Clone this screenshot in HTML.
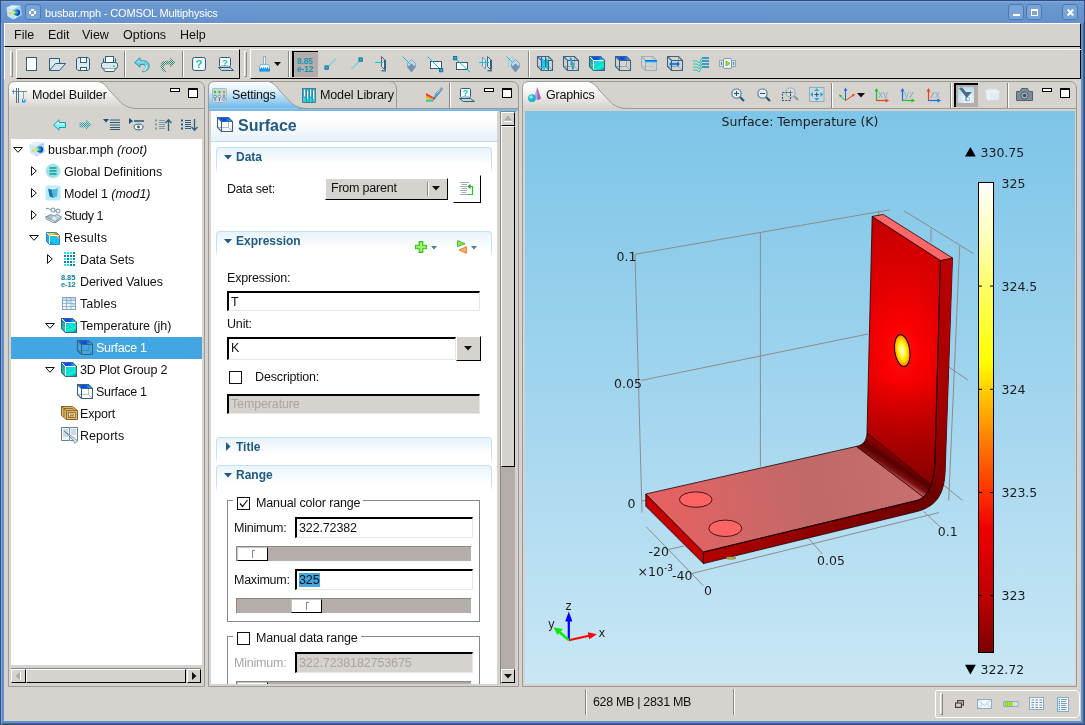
<!DOCTYPE html>
<html><head><meta charset="utf-8"><title>busbar.mph - COMSOL Multiphysics</title>
<style>
*{box-sizing:border-box;margin:0;padding:0}
html,body{width:1085px;height:725px;overflow:hidden;background:#d6d2ce}
body{font-family:"Liberation Sans",sans-serif;font-size:12px;color:#111;position:relative}
.abs,.t,svg.i{position:absolute}
svg.i{overflow:visible}
.t{white-space:nowrap;line-height:14px}
#frame{position:absolute;left:0;top:0;width:1085px;height:725px;will-change:transform}
#titlebar{position:absolute;left:1px;top:1px;width:1083px;height:22px;background:linear-gradient(#7ca6dc 0,#7ca6dc 1px,#6c99d2 2px,#6491cb 22px)}
#title{position:absolute;left:44px;top:6px;color:#fff;font-size:11px;letter-spacing:-0.15px;white-space:nowrap}
#client{position:absolute;left:4px;top:23px;width:1077px;height:698px;background:#d6d2ce}
#menubar{position:absolute;left:0;top:0;width:1077px;height:24px;border-top:1px solid #fff;border-left:1px solid #fff;border-bottom:1px solid #000;border-right:1px solid #000}
#menubar span{position:absolute;top:4px;font-size:12.5px}
.panel{position:absolute;border:1px solid #9d9995;border-radius:7px 7px 0 0;background:#d6d2ce;overflow:hidden}
.tabline{position:absolute;left:0;right:0;height:1px;background:#9d9995}
.sunk{position:absolute;border:1px solid;border-color:#000 #e8e6e4 #e8e6e4 #000;background:#fff}
.raised{position:absolute;border:1px solid;border-color:#fff #000 #000 #fff;background:#d6d2ce}
.sec{position:absolute;left:5px;width:276px;height:20px;border:1px solid #c2e1f4;border-bottom:none;border-radius:4px 4px 0 0;background:linear-gradient(#e8f3fb,#fff 90%)}
.sec b{position:absolute;left:19px;top:2px;color:#215a82;font-size:12px;white-space:nowrap;line-height:14px}
.vsep{position:absolute;width:2px;border-left:1px solid #8a8683;border-right:1px solid #fff}
.handle{position:absolute;width:3px;border-left:1px solid #fff;border-right:1px solid #8a8683;border-top:1px solid #fff;border-bottom:1px solid #8a8683}
.tbox{position:absolute;border-top:1px solid #fff;border-left:1px solid #fff;border-bottom:1px solid #000;border-right:1px solid #000}
.dv{font-family:"DejaVu Sans",sans-serif}
</style></head><body>
<div id="bg" style="position:absolute;left:0;top:0;width:1085px;height:725px;background:#6390ca;border:1px solid #34507e;box-shadow:inset 1px 1px 0 #7ca6dc,inset -1px -1px 0 #43639a"></div>
<div id="frame">
<div id="titlebar"><div id="title">busbar.mph - COMSOL Multiphysics</div></div>
<div id="client">
<div id="menubar"><span style="left:9px">File</span><span style="left:43px">Edit</span><span style="left:77px">View</span><span style="left:118px">Options</span><span style="left:175px">Help</span></div>
</div>
<svg width="0" height="0" style="position:absolute"><defs>
<linearGradient id="gsurf" x1="0" y1="0" x2="1" y2="0"><stop offset="0" stop-color="#18c0f0"/><stop offset="0.25" stop-color="#0a50f0"/><stop offset="0.55" stop-color="#0a48f0"/><stop offset="0.8" stop-color="#18b0f0"/><stop offset="1" stop-color="#20f0e8"/></linearGradient>
<linearGradient id="gvol" x1="0.2" y1="0" x2="0.8" y2="1"><stop offset="0" stop-color="#20b0f0"/><stop offset="0.25" stop-color="#10e0f0"/><stop offset="0.45" stop-color="#10e0a0"/><stop offset="0.6" stop-color="#08f0f0"/><stop offset="0.8" stop-color="#10d8c0"/><stop offset="1" stop-color="#1878f0"/></linearGradient>
<linearGradient id="gvolL" x1="0" y1="0" x2="0" y2="1"><stop offset="0" stop-color="#2a7fe8"/><stop offset="0.5" stop-color="#22b890"/><stop offset="1" stop-color="#30d8c8"/></linearGradient>
<linearGradient id="grain" x1="0" y1="1" x2="1" y2="0"><stop offset="0" stop-color="#1840d8"/><stop offset="0.3" stop-color="#20c8e8"/><stop offset="0.55" stop-color="#f0e040"/><stop offset="0.8" stop-color="#f07020"/><stop offset="1" stop-color="#d81818"/></linearGradient>
<linearGradient id="gcbar" x1="0" y1="0" x2="0" y2="1"><stop offset="0" stop-color="#ffffff"/><stop offset="0.12" stop-color="#ffffd0"/><stop offset="0.30" stop-color="#ffff60"/><stop offset="0.44" stop-color="#ffee00"/><stop offset="0.55" stop-color="#ffa000"/><stop offset="0.66" stop-color="#ff4000"/><stop offset="0.78" stop-color="#f00000"/><stop offset="0.90" stop-color="#b00000"/><stop offset="1" stop-color="#800000"/></linearGradient>
<pattern id="dith" width="2" height="2" patternUnits="userSpaceOnUse"><rect width="2" height="2" fill="#d6d2ce"/><rect width="1" height="1" fill="#2e8c78"/><rect x="1" y="1" width="1" height="1" fill="#2e8c78"/></pattern>
<pattern id="dithc" width="2" height="2" patternUnits="userSpaceOnUse"><rect width="2" height="2" fill="#d6d2ce"/><rect width="1" height="1" fill="#28a0a8"/><rect x="1" y="1" width="1" height="1" fill="#28a0a8"/></pattern>
</defs></svg>
<svg class="i" style="left:6px;top:5px" width="16" height="15" viewBox="0 0 16 15" ><path d="M0.5 2.8L5.5 0.3L14.5 0.8L15.8 10L7.5 14.5L1.5 11Z" fill="#a8d4f0" fill-opacity="0.85"/><path d="M0.5 2.8L7 4.5L7.5 14.5L1.5 11Z" fill="#d4ecfa" fill-opacity="0.75"/><path d="M0.5 2.8L5.5 0.3L14.5 0.8L7 4.5Z" fill="#e8f6fe" fill-opacity="0.8"/><path d="M7 4.5L14.5 0.8L15.8 10L7.5 14.5Z" fill="#9cccf0" fill-opacity="0.6"/>
<circle cx="11" cy="7.6" r="3.1" fill="#1038b8"/><circle cx="10" cy="7.3" r="2.4" fill="#1890e0"/><circle cx="8.6" cy="7.3" r="2" fill="#30d0a0"/><circle cx="7.6" cy="7.2" r="1.5" fill="#e8e830"/><circle cx="4.2" cy="8.6" r="1.3" fill="#e8d040"/><path d="M7.2 9.5L8 14L12 11.5Z" fill="#fff" fill-opacity="0.55"/></svg>
<div class="abs" style="left:25px;top:4px;width:16px;height:16px;border:1px solid #4d78b4;border-radius:3px;background:#7aa3d9"></div>
<svg class="i" style="left:29px;top:9px" width="8" height="8" viewBox="0 0 8 8" ><path d="M2 0H5V2H7V5H5V7H2V5H0V2H2Z" fill="#fff"/><rect x="2" y="2" width="3" height="3" fill="#7aa3d9"/></svg>
<div class="abs" style="left:1008px;top:4px;width:16px;height:16px;border:1px solid #4d78b4;border-radius:3px;background:#7aa3d9"></div>
<div class="abs" style="left:1026px;top:4px;width:16px;height:16px;border:1px solid #4d78b4;border-radius:3px;background:#7aa3d9"></div>
<div class="abs" style="left:1062px;top:4px;width:16px;height:16px;border:1px solid #4d78b4;border-radius:3px;background:#7aa3d9"></div>
<div class="abs" style="left:1013px;top:14px;width:7px;height:2px;background:#fff"></div>
<div class="abs" style="left:1031px;top:9px;width:7px;height:7px;border:1px solid #fff;border-top-width:2px"></div>
<svg class="i" style="left:1067px;top:9px" width="7" height="7" viewBox="0 0 7 7" ><path d="M0.7 0.5L6.3 6.5M6.3 0.5L0.7 6.5" stroke="#fff" stroke-width="2"/></svg>
<div class="abs" style="left:4px;top:47px;width:1077px;height:32px;border-left:1px solid #fff;border-right:1px solid #000"></div>
<div class="handle" style="left:10px;top:51px;height:26px"></div>
<div class="tbox" style="left:16px;top:49px;width:224px;height:30px"></div>
<div class="handle" style="left:244px;top:51px;height:26px"></div>
<div class="tbox" style="left:250px;top:49px;width:831px;height:30px;border-right:none"></div>
<div class="vsep" style="left:124px;top:51px;height:26px"></div>
<div class="vsep" style="left:182px;top:51px;height:26px"></div>
<div class="vsep" style="left:288px;top:51px;height:26px"></div>
<div class="vsep" style="left:528px;top:51px;height:26px"></div>
<svg class="i" style="left:26px;top:57px" width="11" height="14" viewBox="0 0 11 14" ><rect x="0.5" y="0.5" width="10" height="13" fill="#fff" stroke="#2c5f7a"/></svg>
<svg class="i" style="left:49px;top:58px" width="17" height="13" viewBox="0 0 17 13" ><path d="M0.5 12.5V0.5H10.5V5.5" fill="#dde8ee" stroke="#2c5f7a"/><path d="M0.5 12.5L6.5 5.5H16.5L10.5 12.5Z" fill="#d4e2ea" stroke="#2c5f7a"/></svg>
<svg class="i" style="left:76px;top:57px" width="14" height="14" viewBox="0 0 14 14" ><path d="M2 0.5H12L13.5 2V12L12 13.5H2L0.5 12V2Z" fill="#dde8ee" stroke="#2c5f7a"/><rect x="4.5" y="0.5" width="6" height="5" fill="#f4f8fa" stroke="#2c5f7a"/><rect x="4.5" y="10.5" width="6" height="3" fill="#fff" stroke="#2c5f7a"/></svg>
<svg class="i" style="left:101px;top:56px" width="17" height="16" viewBox="0 0 17 16" ><rect x="4.5" y="0.5" width="8" height="6" fill="#fff" stroke="#2c5f7a"/><path d="M2.5 6V2.5M14.5 6V2.5" stroke="#2c5f7a"/><rect x="0.5" y="6.5" width="16" height="6" rx="2" fill="#dce8f0" stroke="#2c5f7a"/><path d="M3 12.5V14Q3 15.5 5 15.5H12Q14 15.5 14 14V12.5" fill="#fff" stroke="#2c5f7a"/><rect x="12" y="9.5" width="1.5" height="1.5" fill="#20d020"/></svg>
<svg class="i" style="left:134px;top:57px" width="16" height="16" viewBox="0 0 16 16" ><path d="M0.5 5.5L6 0.8V3.8H10Q15.2 4.2 15.2 9.5Q15 13.5 9 15L8.5 14Q12 12.5 11.8 9.8Q11.5 7.5 9 7.5H6V10.2Z" fill="#6cd0dc" stroke="#2a90a8" stroke-width="0.9"/><path d="M12 8Q13.8 11 9.5 14.3" fill="none" stroke="#c8f0f4" stroke-width="1.3"/><path d="M3 5.5L5.5 3.4V5H10" fill="none" stroke="#a8e8f0" stroke-width="0.8"/></svg>
<svg class="i" style="left:159px;top:57px" width="17" height="16" viewBox="0 0 17 16" ><path d="M16.5 5.5L11 0.8V3.8H7Q1.5 4.2 1.5 9.5Q1.8 13.5 6.5 15.5L7 14.5Q4.8 12.5 5 9.8Q5.3 7.5 8 7.5H11V10.2Z" fill="url(#dith)"/></svg>
<svg class="i" style="left:192px;top:57px" width="14" height="14" viewBox="0 0 14 14" ><rect x="0.5" y="0.5" width="13" height="13" rx="2" fill="#e4eef4" stroke="#2c5f7a"/><rect x="2" y="2" width="10" height="10" fill="#f6fafc"/><text x="7" y="11.3" font-family="Liberation Sans,sans-serif" font-weight="bold" font-size="11.5" fill="#14c4b4" text-anchor="middle">?</text></svg>
<svg class="i" style="left:218px;top:57px" width="16" height="15" viewBox="0 0 16 15" ><rect x="1.5" y="0.5" width="11" height="9" rx="1" fill="#f6fafc" stroke="#2c5f7a"/><path d="M0.5 10.5H12.5L15.5 13.5H3.5Z" fill="#c8d4dc" stroke="#2c5f7a"/><rect x="3" y="8" width="8" height="2" fill="#b8c4cc"/><text x="7" y="8.6" font-family="Liberation Sans,sans-serif" font-weight="bold" font-size="9" fill="#14c4b4" text-anchor="middle">?</text></svg>
<svg class="i" style="left:259px;top:56px" width="12" height="16" viewBox="0 0 12 16" ><rect x="4.5" y="0.5" width="2" height="8" fill="#eef4f8" stroke="#8fb0c4"/><path d="M1.5 8.5H9.5L10.5 11V15H0.5V11Z" fill="#e8f2f8" stroke="#78a8c8" stroke-width="0.8"/><rect x="0.5" y="12.5" width="10.5" height="3" fill="#1898e8"/><path d="M2.5 11.5V13.5M4.5 11.5V13.5M6.5 11.5V13.5M8.5 11.5V13.5" stroke="#1898e8"/></svg>
<svg class="i" style="left:274px;top:62px" width="7" height="4" viewBox="0 0 7 4" ><path d="M0 0H7L3.5 4Z" fill="#111"/></svg>
<div class="abs" style="left:292px;top:51px;width:26px;height:26px;background:#b5adaa;border-top:1px solid #000;border-left:2px solid #000"></div>
<div class="t" style="left:297px;top:56.5px;font-size:8.5px;line-height:8px;font-weight:bold;color:#1c94b4;letter-spacing:-0.2px">8.85<br>e-12</div>
<svg class="i" style="left:324px;top:56px" width="14" height="16" viewBox="0 0 14 16" ><path d="M4.5 10.5L12 2.5" stroke="#58d0d8" stroke-width="1.6" stroke-dasharray="1 0.6"/><rect x="0.9" y="9.9" width="3.4" height="3.4" fill="#28a8d0" stroke="#106890" stroke-width="0.8"/></svg>
<svg class="i" style="left:350px;top:56px" width="14" height="16" viewBox="0 0 14 16" ><path d="M1.5 13L9.5 5" stroke="#58d0d8" stroke-width="1.6" stroke-dasharray="1 0.6"/><rect x="8.9" y="1.9" width="3.4" height="3.4" fill="#28a8d0" stroke="#106890" stroke-width="0.8"/></svg>
<svg class="i" style="left:375px;top:56px" width="12" height="16" viewBox="0 0 12 16" ><path d="M6.5 0.5L9.5 3.5V13.5L6.5 10.5Z" fill="#dce8f0" stroke="#2c5f7a" stroke-width="0.9"/><path d="M9.5 3.5L11 4V13.8L9.5 13.5" fill="#2c5f7a"/><path d="M6.5 14.8H11" stroke="#2c5f7a" stroke-width="1.2"/><path d="M0 6.5H8" stroke="#00c8d8" stroke-width="1"/><path d="M8 3V6" stroke="#f08080" stroke-width="0.8"/></svg>
<svg class="i" style="left:402px;top:56px" width="15" height="17" viewBox="0 0 15 17" ><path d="M9.5 3.5L13.5 7.5V11L9.5 16L5.5 11V7.5Z" fill="#c4d8e4" stroke="#5c88a4" stroke-width="0.6"/><path d="M5.5 11L9.5 7.5L13.5 11L9.5 16Z" fill="#6c94b0"/><path d="M0.5 0.5L8 8" stroke="#00c8d8" stroke-width="1"/></svg>
<svg class="i" style="left:427px;top:56px" width="17" height="17" viewBox="0 0 17 17" ><rect x="3.5" y="5.5" width="11" height="7" fill="#fff" stroke="#2c5f7a"/><path d="M0.5 0.5L13 13" stroke="#00c8d8" stroke-width="1"/><rect x="12.4" y="12.4" width="3.4" height="3.4" fill="#28a8d0" stroke="#106890" stroke-width="0.8"/></svg>
<svg class="i" style="left:453px;top:56px" width="18" height="17" viewBox="0 0 18 17" ><rect x="3.5" y="6.5" width="11" height="7" fill="#fff" stroke="#2c5f7a"/><path d="M4 4L17 16" stroke="#00c8d8" stroke-width="1"/><rect x="0.4" y="0.4" width="3.4" height="3.4" fill="#28a8d0" stroke="#106890" stroke-width="0.8"/></svg>
<svg class="i" style="left:479px;top:56px" width="14" height="16" viewBox="0 0 14 16" ><path d="M3.5 1L6.5 4V13L3.5 10Z" fill="#dce8f0" stroke="#5c88a4" stroke-width="0.8"/><path d="M8.5 0.5L11.5 3.5V13.5L8.5 10.5Z" fill="#dce8f0" stroke="#2c5f7a" stroke-width="0.9"/><path d="M11.5 3.5L13 4V13.8L11.5 13.5" fill="#2c5f7a"/><path d="M8.5 14.8H13" stroke="#2c5f7a" stroke-width="1.2"/><path d="M0 6.5H10" stroke="#00c8d8" stroke-width="1"/></svg>
<svg class="i" style="left:506px;top:56px" width="15" height="17" viewBox="0 0 15 17" ><path d="M2.5 4L7 0.5V7.5L2.5 11Z" fill="#c8dce8" stroke="#8fb0c4" stroke-width="0.5"/><path d="M9.5 3.5L13.5 7.5V11L9.5 16L5.5 11V7.5Z" fill="#c4d8e4" stroke="#5c88a4" stroke-width="0.6"/><path d="M5.5 11L9.5 7.5L13.5 11L9.5 16Z" fill="#6c94b0"/><path d="M0.5 0.5L7 7" stroke="#00c8d8" stroke-width="1"/></svg>
<svg class="i" style="left:537px;top:56px" width="16" height="15" viewBox="0 0 16 15" opacity="1"><path d="M0.5 10.5H11.5V0.5M11.5 10.5L15.5 14.5" fill="none" stroke="#3c6480" stroke-opacity="0.4"/><path d="M0.5 0.5H11.5L15.5 4.5V14.5H4.5L0.5 10.5ZM0.5 0.5L4.5 4.5H15.5M4.5 4.5V14.5" fill="none" stroke="#3c6480" stroke-width="1.1"/></svg>
<svg class="i" style="left:537px;top:56px" width="16" height="16" viewBox="0 0 16 16" ><path d="M4 1L8 5V15L4 11Z" fill="#20c8e8"/><path d="M8 1L12 5V15L8 11Z" fill="#20c090"/><path d="M4.5 1V11M8.5 1V11M11.5 4V15" stroke="#1060e8" stroke-width="1"/></svg>
<svg class="i" style="left:563px;top:56px" width="16" height="15" viewBox="0 0 16 15" opacity="1"><path d="M0.5 10.5H11.5V0.5M11.5 10.5L15.5 14.5" fill="none" stroke="#3c6480" stroke-opacity="0.4"/><path d="M0.5 0.5H11.5L15.5 4.5V14.5H4.5L0.5 10.5ZM0.5 0.5L4.5 4.5H15.5M4.5 4.5V14.5" fill="none" stroke="#3c6480" stroke-width="1.1"/></svg>
<svg class="i" style="left:563px;top:56px" width="16" height="16" viewBox="0 0 16 16" ><path d="M7 1Q10 3 8.5 5Q12 7 10.5 9.5Q12 12 9.5 14.5Q8 12 9 10Q6 8.5 8 6Q6 4 7 1Z" fill="#20a0e8"/><path d="M9 7Q10.5 9 9.5 12" stroke="#20c070" stroke-width="1.2" fill="none"/></svg>
<svg class="i" style="left:589px;top:56px" width="16" height="15" viewBox="0 0 16 15" opacity="1"><path d="M0.5 0.5H11.5L15.5 4.5H4.5Z" fill="url(#gsurf)"/><path d="M0.5 0.5L4.5 4.5V14.5L0.5 10.5Z" fill="url(#gvolL)"/><rect x="4.5" y="4.5" width="11" height="10" fill="url(#gvol)"/><path d="M1 1L4.5 4.5M4.5 14V4.5H15" fill="none" stroke="#fff" stroke-width="1"/><path d="M0.5 0.5H11.5L15.5 4.5V14.5H4.5L0.5 10.5Z" fill="none" stroke="#3c6480" stroke-width="1.1"/></svg>
<svg class="i" style="left:615px;top:56px" width="16" height="15" viewBox="0 0 16 15" opacity="1"><path d="M0.5 0.5H11.5L15.5 4.5H4.5Z" fill="url(#gsurf)"/><path d="M0.5 10.5H11.5V0.5M11.5 10.5L15.5 14.5" fill="none" stroke="#3c6480" stroke-opacity="0.4"/><path d="M0.5 0.5H11.5L15.5 4.5V14.5H4.5L0.5 10.5ZM0.5 0.5L4.5 4.5H15.5M4.5 4.5V14.5" fill="none" stroke="#3c6480" stroke-width="1.1"/></svg>
<svg class="i" style="left:641px;top:56px" width="16" height="15" viewBox="0 0 16 15" opacity="0.8"><path d="M0.5 10.5H11.5V0.5M11.5 10.5L15.5 14.5" fill="none" stroke="#8ea8b8" stroke-opacity="0.4"/><path d="M0.5 0.5H11.5L15.5 4.5V14.5H4.5L0.5 10.5ZM0.5 0.5L4.5 4.5H15.5M4.5 4.5V14.5" fill="none" stroke="#8ea8b8" stroke-width="1.1"/></svg>
<svg class="i" style="left:641px;top:56px" width="16" height="16" viewBox="0 0 16 16" ><rect x="4" y="4" width="12" height="2" fill="#1070f0"/><rect x="4" y="5.5" width="12" height="1" fill="#20d8f0"/></svg>
<svg class="i" style="left:667px;top:56px" width="16" height="15" viewBox="0 0 16 15" opacity="1"><path d="M0.5 10.5H11.5V0.5M11.5 10.5L15.5 14.5" fill="none" stroke="#3c6480" stroke-opacity="0.4"/><path d="M0.5 0.5H11.5L15.5 4.5V14.5H4.5L0.5 10.5ZM0.5 0.5L4.5 4.5H15.5M4.5 4.5V14.5" fill="none" stroke="#3c6480" stroke-width="1.1"/></svg>
<svg class="i" style="left:667px;top:56px" width="16" height="16" viewBox="0 0 16 16" ><path d="M3 8H12" stroke="#20c8f0" stroke-width="2.4"/><path d="M2 8L5 5.8V10.2ZM13 8L10 5.8V10.2Z" fill="#1060e0"/><path d="M4 8H11" stroke="#1060e0" stroke-width="1.2"/></svg>
<svg class="i" style="left:693px;top:56px" width="16" height="17" viewBox="0 0 16 17" ><path d="M0 5.0H4L6 7.0L9 2.0H16" fill="none" stroke="#28c8b8" stroke-width="1"/><path d="M9 2.0H16" stroke="#1880c0" stroke-width="1.3"/><path d="M0 8.0H4L6 10.0L9 5.0H16" fill="none" stroke="#28c8b8" stroke-width="1"/><path d="M9 5.0H16" stroke="#1880c0" stroke-width="1.3"/><path d="M0 11.0H4L6 13.0L9 8.0H16" fill="none" stroke="#28c8b8" stroke-width="1"/><path d="M9 8.0H16" stroke="#1880c0" stroke-width="1.3"/><path d="M0 14.0H4L6 16.0L9 11.0H16" fill="none" stroke="#28c8b8" stroke-width="1"/><path d="M9 11.0H16" stroke="#1880c0" stroke-width="1.3"/></svg>
<svg class="i" style="left:719px;top:58px" width="17" height="12" viewBox="0 0 17 12" ><rect x="0.5" y="2.5" width="16" height="6" fill="#d8e4ec" stroke="#7c9cb0" stroke-width="0.8"/><rect x="4.5" y="0.5" width="8" height="10" rx="1.5" fill="#eef4f8" stroke="#7c9cb0"/><path d="M7 3L11 5.5L7 8Z" fill="#a0e020" stroke="#60a010" stroke-width="0.6"/><path d="M2.5 4V7M14.5 4V7" stroke="#5c88a4" stroke-width="1.2"/></svg>
<svg width="0" height="0" style="position:absolute"><defs>
<linearGradient id="grain2" x1="0" y1="0" x2="1" y2="0"><stop offset="0" stop-color="#f0a020"/><stop offset="0.4" stop-color="#f8e020"/><stop offset="0.75" stop-color="#f08020"/><stop offset="1" stop-color="#e02010"/></linearGradient><linearGradient id="gres" x1="0" y1="1" x2="1" y2="0"><stop offset="0" stop-color="#1878f0"/><stop offset="0.35" stop-color="#10d0f0"/><stop offset="0.7" stop-color="#20b8f0"/><stop offset="0.85" stop-color="#f0c020"/><stop offset="1" stop-color="#f04010"/></linearGradient><linearGradient id="tabg" x1="0" y1="0" x2="0" y2="1"><stop offset="0" stop-color="#ffffff"/><stop offset="0.25" stop-color="#fbfbfa"/><stop offset="1" stop-color="#d6d2ce"/></linearGradient>
<linearGradient id="tabb" x1="0" y1="0" x2="0" y2="1"><stop offset="0" stop-color="#ffffff"/><stop offset="0.3" stop-color="#e4f2fb"/><stop offset="1" stop-color="#6cb9e8"/></linearGradient>
</defs></svg>
<div class="abs" id="mb" style="left:8px;top:81px;width:197px;height:606px">
<div class="abs" style="left:0;top:0;width:197px;height:606px;border:1px solid #9d9995;border-radius:7px 7px 0 0"></div>
<div class="abs" style="left:130px;top:27px;width:67px;height:1px;background:#9d9995"></div>
<svg class="i" style="left:0;top:0" width="197" height="30"><path d="M0.5 27.5V6.5Q0.5 0.5 6.5 0.5H89C95 0.5 98 5 102 10L111 19.5C115 24 120 27.5 130 27.5H0.5Z" fill="url(#tabg)"/><path d="M0.5 27.5V6.5Q0.5 0.5 6.5 0.5H89C95 0.5 98 5 102 10L111 19.5C115 24 120 27.5 130 27.5" fill="none" stroke="#9d9995"/></svg>
<svg class="i" style="left:4px;top:6px" width="16" height="17" viewBox="0 0 16 17" ><path d="M0 4.5H15" stroke="#6c8ca0"/><path d="M4.5 1V16M6.5 1V16" stroke="#4c748c"/><path d="M1.5 2.5V7" stroke="#6c8ca0"/><path d="M11.5 5V12" stroke="#8ca4b4"/><rect x="10" y="12" width="3.5" height="3.5" fill="#1890f0"/><rect x="11" y="12" width="1.5" height="2" fill="#d6e8f8"/></svg>
<div class="t" style="left:24px;top:7px;font-size:12.5px;letter-spacing:-0.134px">Model Builder</div>
<div class="abs" style="left:162px;top:7px;width:10px;height:4px;border:1px solid #000;background:#fff"></div><div class="abs" style="left:180px;top:7px;width:10px;height:10px;border:1px solid #000;border-top-width:2px;background:#fff"></div>
<svg class="i" style="left:45px;top:38px" width="13" height="12" viewBox="0 0 13 12" ><path d="M0.6 6L6 0.8V3.5H12.5V8.5H6V11.2Z" fill="#7ff0f4" stroke="#18a0b0" stroke-width="1"/><path d="M2.5 6L5.5 3.2V5H11V6" fill="none" stroke="#e0ffff" stroke-width="1"/></svg>
<svg class="i" style="left:71px;top:38px" width="13" height="12" viewBox="0 0 13 12" ><path d="M12.4 6L7 0.8V3.5H0.5V8.5H7V11.2Z" fill="url(#dithc)"/></svg>
<svg class="i" style="left:95px;top:38px" width="17" height="11" viewBox="0 0 17 11" ><path d="M0 0H6L3 3.5Z" fill="#1c4c80"/><path d="M7 1H17M7 3.5H17M7 6H17M7 8.5H17M7 10.5H17" stroke="#2c5f7a" stroke-width="1.2"/></svg>
<svg class="i" style="left:121px;top:37px" width="16" height="13" viewBox="0 0 16 13" ><path d="M0 0L4 3L0 6Z" fill="#1c4c80"/><path d="M5 3H15" stroke="#2c5f7a" stroke-width="1.6"/><ellipse cx="9.5" cy="9" rx="4.5" ry="2.8" fill="#fff" stroke="#2c5f7a" stroke-width="1"/><circle cx="9.5" cy="9" r="1.4" fill="#2c5f7a"/></svg>
<svg class="i" style="left:147px;top:38px" width="17" height="12" viewBox="0 0 17 12" ><path d="M0 0.5H2V2.5H0ZM0 4.5H2V6.5H0ZM0 8.5H2V10.5H0Z" fill="#7f9cac"/><path d="M4 1.5H10M4 3.5H10M4 5.5H10M4 7.5H10M4 9.5H10" stroke="#7f9cac" stroke-width="1"/><path d="M13.5 12V1M10.5 4L13.5 0.8L16.5 4" fill="none" stroke="#2c5f7a" stroke-width="1.3"/></svg>
<svg class="i" style="left:173px;top:38px" width="17" height="12" viewBox="0 0 17 12" ><path d="M0 0.5H2V2.5H0ZM0 4.5H2V6.5H0ZM0 8.5H2V10.5H0Z" fill="#2c5f7a"/><path d="M4 1.5H10M4 3.5H10M4 5.5H10M4 7.5H10M4 9.5H10" stroke="#2c5f7a" stroke-width="1"/><path d="M13.5 0V11M10.5 8L13.5 11.2L16.5 8" fill="none" stroke="#2c5f7a" stroke-width="1.3"/></svg>
<div class="abs" style="left:3px;top:58px;width:191px;height:526px;background:#fff"></div>
<div class="abs" style="left:3px;top:587px;width:190px;height:1px;background:#8a8683"></div>
<div class="raised" style="left:3px;top:588px;width:15px;height:14px"></div>
<div class="raised" style="left:18px;top:588px;width:160px;height:14px"></div>
<div class="raised" style="left:179px;top:588px;width:14px;height:14px"></div>
<svg class="i" style="left:7px;top:591px" width="6" height="8" viewBox="0 0 6 8" ><path d="M5 0V8L0.5 4Z" fill="#b0aaa6"/><path d="M5.5 0V8" stroke="#fff"/></svg>
<svg class="i" style="left:184px;top:591px" width="5" height="8" viewBox="0 0 5 8" ><path d="M0 0V8L4.5 4Z" fill="#111"/></svg>
<svg class="i" style="left:5px;top:66px" width="10" height="6" viewBox="0 0 10 6" ><path d="M0.7 0.5H9.3L5 5.3Z" fill="#fff" stroke="#111" stroke-width="1"/></svg>
<svg class="i" style="left:21px;top:61px" width="16" height="15" viewBox="0 0 16 15" ><path d="M0.5 2.8L5.5 0.3L14.5 0.8L15.8 10L7.5 14.5L1.5 11Z" fill="#a8d4f0" fill-opacity="0.85"/><path d="M0.5 2.8L7 4.5L7.5 14.5L1.5 11Z" fill="#d4ecfa" fill-opacity="0.75"/><path d="M0.5 2.8L5.5 0.3L14.5 0.8L7 4.5Z" fill="#e8f6fe" fill-opacity="0.8"/><path d="M7 4.5L14.5 0.8L15.8 10L7.5 14.5Z" fill="#9cccf0" fill-opacity="0.6"/>
<circle cx="11" cy="7.6" r="3.1" fill="#1038b8"/><circle cx="10" cy="7.3" r="2.4" fill="#1890e0"/><circle cx="8.6" cy="7.3" r="2" fill="#30d0a0"/><circle cx="7.6" cy="7.2" r="1.5" fill="#e8e830"/><circle cx="4.2" cy="8.6" r="1.3" fill="#e8d040"/><path d="M7.2 9.5L8 14L12 11.5Z" fill="#fff" fill-opacity="0.55"/></svg>
<div class="t" style="left:40px;top:62px;font-size:12.5px;letter-spacing:0.027px;color:#111">busbar.mph <i>(root)</i></div>
<svg class="i" style="left:23px;top:85px" width="6" height="10" viewBox="0 0 6 10" ><path d="M0.5 0.7V9.3L5.3 5Z" fill="#fff" stroke="#111" stroke-width="1"/></svg>
<svg class="i" style="left:37px;top:82px" width="16" height="16" viewBox="0 0 16 16" ><circle cx="8" cy="8" r="7.3" fill="#a4e4e0" stroke="#c8f0ee" stroke-width="0.6"/><path d="M4.5 5H11.5M4.5 8H11.5M4.5 11H11.5" stroke="#108c94" stroke-width="1.7"/><path d="M4.5 5.8H11.5M4.5 8.8H11.5M4.5 11.8H11.5" stroke="#20d8d8" stroke-width="0.6"/></svg>
<div class="t" style="left:56px;top:84px;font-size:12.5px;letter-spacing:0.019px;color:#111">Global Definitions</div>
<svg class="i" style="left:23px;top:107px" width="6" height="10" viewBox="0 0 6 10" ><path d="M0.5 0.7V9.3L5.3 5Z" fill="#fff" stroke="#111" stroke-width="1"/></svg>
<svg class="i" style="left:37px;top:104px" width="16" height="16" viewBox="0 0 16 16" ><rect x="0.5" y="0.5" width="15" height="15" rx="2.5" fill="#b8ecf6"/><path d="M3 3.5L7 4.5L8.5 13L4.5 11.5Z" fill="#1878b8"/><path d="M7 4.5L13 3L12 11.5L8.5 13Z" fill="#58b8e0"/><path d="M3 3.5L9 2L13 3L7 4.5Z" fill="#e0f6fc"/></svg>
<div class="t" style="left:56px;top:106px;font-size:12.5px;letter-spacing:-0.081px;color:#111">Model 1 <i>(mod1)</i></div>
<svg class="i" style="left:23px;top:129px" width="6" height="10" viewBox="0 0 6 10" ><path d="M0.5 0.7V9.3L5.3 5Z" fill="#fff" stroke="#111" stroke-width="1"/></svg>
<svg class="i" style="left:37px;top:126px" width="17" height="16" viewBox="0 0 17 16" ><circle cx="8" cy="3" r="2" fill="#fff" stroke="#4c748c" stroke-width="0.8"/><circle cx="13" cy="4" r="2" fill="#fff" stroke="#4c748c" stroke-width="0.8"/><path d="M1 1.5Q3 0.5 6 3M10 3.3L11 3.6" fill="none" stroke="#4c748c" stroke-width="0.8"/><path d="M0.5 10L6 7.5L9 9L12 7.5L16.5 10L10 14.5L7 13Z" fill="#e4ecf0" stroke="#4c748c" stroke-width="0.8"/><path d="M2 10L6.5 8.5M3 11L7.5 9.5M4.5 12L8 10.5M10 10L12 9M11 11.5L14 10" stroke="#6c8ca0" stroke-width="0.6"/><path d="M0.5 11.5L7 15L10 15.8L16.5 11.5" fill="none" stroke="#4c748c" stroke-width="0.8"/></svg>
<div class="t" style="left:56px;top:128px;font-size:12.5px;letter-spacing:-0.484px;color:#111">Study 1</div>
<svg class="i" style="left:21px;top:154px" width="10" height="6" viewBox="0 0 10 6" ><path d="M0.7 0.5H9.3L5 5.3Z" fill="#fff" stroke="#111" stroke-width="1"/></svg>
<svg class="i" style="left:38px;top:151px" width="15" height="13" viewBox="0 0 15 13" ><path d="M0.5 0.5H10.5L13.5 3.5H3.5Z" fill="url(#grain2)"/><path d="M0.5 0.5L3.5 3.5V12.5L0.5 9.5Z" fill="#28a8f0"/><rect x="3.5" y="3.5" width="10" height="9" fill="url(#gres)"/><path d="M1 1L3.5 3.5M3.5 12V3.5H13" fill="none" stroke="#fff" stroke-width="1"/><path d="M0.5 0.5H10.5L13.5 3.5V12.5H3.5L0.5 9.5Z" fill="none" stroke="#2888d0" stroke-width="1"/></svg>
<div class="t" style="left:56px;top:150px;font-size:12.5px;letter-spacing:0.203px;color:#111">Results</div>
<svg class="i" style="left:39px;top:173px" width="6" height="10" viewBox="0 0 6 10" ><path d="M0.5 0.7V9.3L5.3 5Z" fill="#fff" stroke="#111" stroke-width="1"/></svg>
<svg class="i" style="left:56px;top:171px" width="11" height="14" viewBox="0 0 11 14" ><rect x="0" y="0" width="2" height="2" fill="#18e8e8"/><rect x="3" y="0" width="2" height="2" fill="#18e8e8"/><rect x="6" y="0" width="2" height="2" fill="#18e8e8"/><rect x="9" y="0" width="2" height="2" fill="#0c80a8"/><rect x="0" y="3" width="2" height="2" fill="#0c80a8"/><rect x="3" y="3" width="2" height="2" fill="#0c80a8"/><rect x="6" y="3" width="2" height="2" fill="#0c80a8"/><rect x="9" y="3" width="2" height="2" fill="#0c80a8"/><rect x="0" y="6" width="2" height="2" fill="#18e8e8"/><rect x="3" y="6" width="2" height="2" fill="#0c80a8"/><rect x="6" y="6" width="2" height="2" fill="#18e8e8"/><rect x="9" y="6" width="2" height="2" fill="#0c80a8"/><rect x="0" y="9" width="2" height="2" fill="#0c80a8"/><rect x="3" y="9" width="2" height="2" fill="#0c80a8"/><rect x="6" y="9" width="2" height="2" fill="#0c80a8"/><rect x="9" y="9" width="2" height="2" fill="#18e8e8"/><rect x="0" y="12" width="2" height="2" fill="#18e8e8"/><rect x="3" y="12" width="2" height="2" fill="#18e8e8"/><rect x="6" y="12" width="2" height="2" fill="#0c80a8"/><rect x="9" y="12" width="2" height="2" fill="#0c80a8"/></svg>
<div class="t" style="left:72px;top:172px;font-size:12.5px;letter-spacing:-0.076px;color:#111">Data Sets</div>
<div class="t" style="left:52px;top:193px;margin-left:1px;font-size:7.5px;line-height:7px;font-weight:bold;color:#0c7c94;letter-spacing:-0.1px">8.85<br>e-12</div>
<div class="t" style="left:72px;top:194px;font-size:12.5px;letter-spacing:-0.067px;color:#111">Derived Values</div>
<svg class="i" style="left:54px;top:216px" width="14" height="13" viewBox="0 0 14 13" ><rect x="0.5" y="0.5" width="13" height="12" fill="#eef6fc" stroke="#88a8c0"/><rect x="1" y="1" width="12" height="2.5" fill="#c8dcec"/><path d="M0.5 3.5H13.5M0.5 6.5H13.5M0.5 9.5H13.5M4.5 0.5V12.5M9 0.5V12.5" stroke="#88a8c0" stroke-width="0.8"/><rect x="5" y="4" width="3.5" height="2" fill="#b0e8f8"/><rect x="9.5" y="7" width="3.5" height="2" fill="#b0e8f8"/></svg>
<div class="t" style="left:72px;top:216px;font-size:12.5px;letter-spacing:0.112px;color:#111">Tables</div>
<svg class="i" style="left:37px;top:242px" width="10" height="6" viewBox="0 0 10 6" ><path d="M0.7 0.5H9.3L5 5.3Z" fill="#fff" stroke="#111" stroke-width="1"/></svg>
<svg class="i" style="left:53px;top:237px" width="16" height="15" viewBox="0 0 16 15" opacity="1"><path d="M0.5 0.5H11.5L15.5 4.5H4.5Z" fill="url(#gsurf)"/><path d="M0.5 0.5L4.5 4.5V14.5L0.5 10.5Z" fill="url(#gvolL)"/><rect x="4.5" y="4.5" width="11" height="10" fill="url(#gvol)"/><path d="M1 1L4.5 4.5M4.5 14V4.5H15" fill="none" stroke="#fff" stroke-width="1"/><path d="M0.5 0.5H11.5L15.5 4.5V14.5H4.5L0.5 10.5Z" fill="none" stroke="#3c6480" stroke-width="1.1"/></svg>
<div class="t" style="left:72px;top:238px;font-size:12.5px;letter-spacing:-0.018px;color:#111">Temperature (jh)</div>
<div class="abs" style="left:3px;top:256px;width:191px;height:22px;background:#41a6e2"></div>
<svg class="i" style="left:69px;top:259px" width="16" height="15" viewBox="0 0 16 15" opacity="1"><path d="M0.5 0.5H11.5L15.5 4.5H4.5Z" fill="url(#gsurf)"/><path d="M0.5 10.5H11.5V0.5M11.5 10.5L15.5 14.5" fill="none" stroke="#3c6480" stroke-opacity="0.4"/><path d="M0.5 0.5H11.5L15.5 4.5V14.5H4.5L0.5 10.5ZM0.5 0.5L4.5 4.5H15.5M4.5 4.5V14.5" fill="none" stroke="#3c6480" stroke-width="1.1"/></svg>
<div class="t" style="left:88px;top:260px;font-size:12.5px;letter-spacing:-0.322px;color:#fff">Surface 1</div>
<svg class="i" style="left:37px;top:286px" width="10" height="6" viewBox="0 0 10 6" ><path d="M0.7 0.5H9.3L5 5.3Z" fill="#fff" stroke="#111" stroke-width="1"/></svg>
<svg class="i" style="left:53px;top:281px" width="16" height="15" viewBox="0 0 16 15" opacity="1"><path d="M0.5 0.5H11.5L15.5 4.5H4.5Z" fill="url(#gsurf)"/><path d="M0.5 0.5L4.5 4.5V14.5L0.5 10.5Z" fill="url(#gvolL)"/><rect x="4.5" y="4.5" width="11" height="10" fill="url(#gvol)"/><path d="M1 1L4.5 4.5M4.5 14V4.5H15" fill="none" stroke="#fff" stroke-width="1"/><path d="M0.5 0.5H11.5L15.5 4.5V14.5H4.5L0.5 10.5Z" fill="none" stroke="#3c6480" stroke-width="1.1"/></svg>
<div class="t" style="left:72px;top:282px;font-size:12.5px;letter-spacing:-0.155px;color:#111">3D Plot Group 2</div>
<svg class="i" style="left:69px;top:303px" width="16" height="15" viewBox="0 0 16 15" opacity="1"><path d="M0.5 0.5H11.5L15.5 4.5H4.5Z" fill="url(#gsurf)"/><path d="M0.5 10.5H11.5V0.5M11.5 10.5L15.5 14.5" fill="none" stroke="#3c6480" stroke-opacity="0.4"/><path d="M0.5 0.5H11.5L15.5 4.5V14.5H4.5L0.5 10.5ZM0.5 0.5L4.5 4.5H15.5M4.5 4.5V14.5" fill="none" stroke="#3c6480" stroke-width="1.1"/></svg>
<div class="t" style="left:88px;top:304px;font-size:12.5px;letter-spacing:-0.322px;color:#111">Surface 1</div>
<svg class="i" style="left:53px;top:325px" width="17" height="14" viewBox="0 0 17 14" ><path d="M0.5 0.5H11.5L16.5 4.5V13.5H5.5L0.5 9.5Z" fill="#d8b870" stroke="#8c6420"/><path d="M0.5 0.5L5.5 4.5H16.5M5.5 4.5V13.5M3 2.5H11.5L13 3.5M3 2.5V10.5" fill="none" stroke="#8c6420" stroke-width="0.9"/><rect x="7.5" y="6.5" width="7" height="5" fill="#f0e0b0" stroke="#8c6420" stroke-width="0.8"/><path d="M9 8H12.5V9.5H9V11H13" fill="none" stroke="#8c6420" stroke-width="0.7"/></svg>
<div class="t" style="left:72px;top:326px;font-size:12.5px;letter-spacing:-0.204px;color:#111">Export</div>
<svg class="i" style="left:53px;top:346px" width="17" height="17" viewBox="0 0 17 17" ><path d="M0.5 0.5H8L8.5 2L9 0.5H16.5V13.5H9L8.5 12.5L8 13.5H0.5Z" fill="#f4f8fa" stroke="#4c748c" stroke-width="0.9"/><path d="M8.5 2V12.5" stroke="#4c748c" stroke-width="0.7"/><path d="M2 3H7M2 5H7M2 7H7M2 9H7M10 3H15M10 5H15M10 7H15" stroke="#88a0b0" stroke-width="0.7"/><path d="M3 4L12 13L14 16.5L16.5 14L13.5 11.5Z" fill="#dce8f0" stroke="#4c748c" stroke-width="0.7"/></svg>
<div class="t" style="left:72px;top:348px;font-size:12.5px;letter-spacing:0.062px;color:#111">Reports</div>
</div>
<div class="abs" id="st" style="left:208px;top:81px;width:311px;height:606px">
<div class="abs" style="left:0;top:0;width:311px;height:606px;border:1px solid #9d9995;border-radius:7px 7px 0 0"></div>
<div class="abs" style="left:90px;top:27px;width:220px;height:1px;background:#9d9995"></div>
<div class="abs" style="left:1px;top:28px;width:309px;height:2px;background:#74bdea"></div>
<svg class="i" style="left:178px;top:0px" width="12" height="28" viewBox="0 0 12 28" ><path d="M0 0.5H4Q10.5 1 10.5 8V28" fill="none" stroke="#9d9995"/></svg>
<svg class="i" style="left:0;top:0" width="311" height="30"><path d="M0.5 27.5V6.5Q0.5 0.5 6.5 0.5H59C65 0.5 68 5 72 10L81 19.5C85 24 90 27.5 100 27.5H0.5Z" fill="url(#tabb)"/><path d="M0.5 27.5V6.5Q0.5 0.5 6.5 0.5H59C65 0.5 68 5 72 10L81 19.5C85 24 90 27.5 100 27.5" fill="none" stroke="#9d9995"/></svg>
<svg class="i" style="left:4px;top:7px" width="15" height="15" viewBox="0 0 15 15" ><rect x="0.5" y="0.5" width="14" height="14" rx="1" fill="#ccd8e0" stroke="#9cb4c4" stroke-width="0.8"/><circle cx="3" cy="4" r="1.2" fill="#20d020"/><circle cx="7.5" cy="4" r="1.2" fill="#20d020"/><circle cx="12" cy="4" r="1.2" fill="#f09010"/><path d="M3 8V13M7.5 8V13M12 6V10" stroke="#4c748c" stroke-width="1"/><circle cx="3" cy="8.5" r="1.4" fill="#e8f0f4" stroke="#4c748c" stroke-width="0.7"/><circle cx="7.5" cy="8.5" r="1.4" fill="#e8f0f4" stroke="#4c748c" stroke-width="0.7"/><circle cx="12" cy="11" r="1.4" fill="#e8f0f4" stroke="#4c748c" stroke-width="0.7"/></svg>
<div class="t" style="left:24px;top:7px;font-size:12.5px;letter-spacing:-0.187px">Settings</div>
<svg class="i" style="left:94px;top:7px" width="14" height="15" viewBox="0 0 14 15" ><rect x="0.5" y="0.5" width="13" height="14" fill="#20b8e0" stroke="#4c748c" stroke-width="0.9"/><rect x="1" y="10" width="12" height="4" fill="#20e0e0"/><rect x="2" y="1.5" width="1.2" height="7" fill="#fff"/><rect x="5" y="2.5" width="1.2" height="8" fill="#fff"/><rect x="8" y="1.5" width="1.2" height="7" fill="#fff"/><rect x="11" y="2.5" width="1.2" height="8" fill="#fff"/><path d="M4.2 1V14M7.2 1V14M10.2 1V14" stroke="#2c6c8c" stroke-width="0.8"/></svg>
<div class="t" style="left:112px;top:7px;font-size:12.5px;letter-spacing:-0.144px">Model Library</div>
<svg class="i" style="left:218px;top:6px" width="17" height="15" viewBox="0 0 17 15" ><path d="M0 6L8 10.5L7 14.5H0Z" fill="#f04020"/><path d="M0 8.5L7.6 12L7 14.5H0Z" fill="#f8b020"/><path d="M0 11L7.4 13L7 14.5H0Z" fill="#f0e820"/><path d="M0 12.5H7.2V14.5H0Z" fill="#20c8f0"/><path d="M8 11L10 6L15.5 0.5L16.5 2L11.5 8.5L8.5 12Z" fill="#5c9cd0" stroke="#3c78b0" stroke-width="0.6"/><path d="M10.5 6.5L15 1.5" stroke="#d8ecf8" stroke-width="0.9"/><path d="M7 13L8.2 10.8L9.2 11.8Z" fill="#1848a0"/></svg>
<div class="vsep" style="left:241px;top:2px;height:25px"></div>
<svg class="i" style="left:251px;top:7px" width="16" height="15" viewBox="0 0 16 15" ><rect x="1.5" y="0.5" width="10" height="9" rx="1" fill="#f6fafc" stroke="#2c5f7a"/><path d="M0.5 10.5H11.5L15.5 13.5H4.5Z" fill="#c8d4dc" stroke="#2c5f7a"/><rect x="3" y="8" width="7" height="2" fill="#b8c4cc"/><text x="6.5" y="8.4" font-family="Liberation Sans,sans-serif" font-weight="bold" font-size="9" fill="#14c4b4" text-anchor="middle">?</text></svg>
<div class="abs" style="left:276px;top:7px;width:10px;height:4px;border:1px solid #000;background:#fff"></div><div class="abs" style="left:294px;top:7px;width:10px;height:10px;border:1px solid #000;border-top-width:2px;background:#fff"></div>
<div class="abs" style="left:3px;top:30px;width:286px;height:573px;background:#fff;overflow:hidden">
<div class="abs" style="left:0;top:0;width:287px;height:31px;background:linear-gradient(#fff 30%,#e6f1fa);border-bottom:1px solid #b9def2"></div>
<svg class="i" style="left:6px;top:6px" width="16" height="15" viewBox="0 0 16 15" opacity="1"><path d="M0.5 0.5H11.5L15.5 4.5H4.5Z" fill="url(#gsurf)"/><path d="M0.5 10.5H11.5V0.5M11.5 10.5L15.5 14.5" fill="none" stroke="#3c6480" stroke-opacity="0.4"/><path d="M0.5 0.5H11.5L15.5 4.5V14.5H4.5L0.5 10.5ZM0.5 0.5L4.5 4.5H15.5M4.5 4.5V14.5" fill="none" stroke="#3c6480" stroke-width="1.1"/></svg>
<div class="t" style="left:27px;top:5px;font-size:16px;font-weight:bold;color:#215a82;line-height:19px">Surface</div>
<div class="sec" style="top:36px;height:20px"><b>Data</b></div>
<div class="abs" style="left:5px;top:56px;width:276px;height:6px;border-left:1px solid;border-right:1px solid;border-image:linear-gradient(#c2e1f4,#fff) 1"></div>
<svg class="i" style="left:13px;top:44px" width="8" height="5" viewBox="0 0 8 5" ><path d="M0 0H8L4 4.5Z" fill="#215a82"/></svg>
<div class="sec" style="top:120px;height:20px"><b>Expression</b></div>
<div class="abs" style="left:5px;top:140px;width:276px;height:6px;border-left:1px solid;border-right:1px solid;border-image:linear-gradient(#c2e1f4,#fff) 1"></div>
<svg class="i" style="left:13px;top:128px" width="8" height="5" viewBox="0 0 8 5" ><path d="M0 0H8L4 4.5Z" fill="#215a82"/></svg>
<div class="sec" style="top:326px;height:20px"><b>Title</b></div>
<div class="abs" style="left:5px;top:346px;width:276px;height:6px;border-left:1px solid;border-right:1px solid;border-image:linear-gradient(#c2e1f4,#fff) 1"></div>
<svg class="i" style="left:15px;top:331px" width="5" height="9" viewBox="0 0 5 9" ><path d="M0 0V9L4.5 4.5Z" fill="#215a82"/></svg>
<div class="sec" style="top:354px;height:20px"><b>Range</b></div>
<div class="abs" style="left:5px;top:374px;width:276px;height:6px;border-left:1px solid;border-right:1px solid;border-image:linear-gradient(#c2e1f4,#fff) 1"></div>
<svg class="i" style="left:13px;top:362px" width="8" height="5" viewBox="0 0 8 5" ><path d="M0 0H8L4 4.5Z" fill="#215a82"/></svg>
<div class="t" style="left:16px;top:71px;font-size:12.5px;letter-spacing:-0.225px;color:#111">Data set:</div>
<div class="raised" style="left:114px;top:67px;width:123px;height:22px"></div>
<div class="t" style="left:120px;top:70px;font-size:12.5px;letter-spacing:-0.218px;color:#111">From parent</div>
<div class="abs" style="left:216px;top:71px;width:2px;height:14px;border-left:1px solid #8a8683;border-right:1px solid #fff"></div>
<svg class="i" style="left:221px;top:75px" width="8" height="5" viewBox="0 0 8 5" ><path d="M0 0H8L4 4.5Z" fill="#111"/></svg>
<div class="raised" style="left:242px;top:64px;width:28px;height:28px;background:#fff"></div>
<svg class="i" style="left:249px;top:70px" width="14" height="14" viewBox="0 0 14 14" ><path d="M0 1.5H9M1.5 3.5H7M0 5.5H7M1.5 7.5H7M0 9.5H7M1.5 11.5H6M0 13.5H7" stroke="#8ca4b8" stroke-width="0.9"/><path d="M7.5 13.5H12.5V5.5H9" fill="none" stroke="#20c820" stroke-width="1.2"/><path d="M7.5 5.5L10.5 2.8V8.2Z" fill="#18a818"/></svg>
<svg class="i" style="left:204px;top:130px" width="12" height="12" viewBox="0 0 12 12" ><path d="M4.2 0.6H7.8V4.2H11.4V7.8H7.8V11.4H4.2V7.8H0.6V4.2H4.2Z" fill="#a0f070" stroke="#30c010" stroke-width="1.1"/></svg>
<svg class="i" style="left:220px;top:135px" width="6" height="4" viewBox="0 0 6 4" ><path d="M0 0H6L3 3.5Z" fill="#4c7c9c"/></svg>
<svg class="i" style="left:246px;top:129px" width="10" height="14" viewBox="0 0 10 14" ><path d="M0.6 0.6L8 3.8L0.6 6.6Z" fill="#90e860" stroke="#28b818" stroke-width="0.9"/><path d="M9.4 6.6L2 10L9.4 13.4Z" fill="#f8b070" stroke="#f07818" stroke-width="0.9"/></svg>
<svg class="i" style="left:260px;top:135px" width="6" height="4" viewBox="0 0 6 4" ><path d="M0 0H6L3 3.5Z" fill="#4c7c9c"/></svg>
<div class="t" style="left:16px;top:160px;font-size:12.5px;letter-spacing:-0.178px;color:#111">Expression:</div>
<div class="sunk" style="left:16px;top:180px;width:253px;height:20px;background:#fff;border-top-width:2px;border-left-width:2px"></div>
<div class="t" style="left:20px;top:184px;font-size:12.5px;letter-spacing:-0.471px;color:#111">T</div>
<div class="t" style="left:16px;top:206px;font-size:12.5px;letter-spacing:-0.173px;color:#111">Unit:</div>
<div class="sunk" style="left:16px;top:226px;width:229px;height:23px;background:#fff;border-top-width:2px;border-left-width:2px"></div>
<div class="t" style="left:20px;top:230px;font-size:12.5px;letter-spacing:-0.338px;color:#111">K</div>
<div class="raised" style="left:245px;top:225px;width:25px;height:25px"></div>
<svg class="i" style="left:253px;top:235px" width="8" height="5" viewBox="0 0 8 5" ><path d="M0 0H8L4 4.5Z" fill="#111"/></svg>
<div class="abs" style="left:18px;top:260px;width:13px;height:13px;border:1px solid #111;background:#fff"></div>
<div class="t" style="left:44px;top:259px;font-size:12.5px;letter-spacing:-0.151px;color:#111">Description:</div>
<div class="sunk" style="left:16px;top:283px;width:253px;height:20px;background:#d6d2ce;border-top-width:2px;border-left-width:2px"></div>
<div class="t" style="left:20px;top:286px;font-size:12.5px;letter-spacing:-0.135px;color:#a9a5a1">Temperature</div>
<div class="abs" style="left:16px;top:389px;width:253px;height:122px;border:1px solid #8a8683"></div>
<div class="abs" style="left:22px;top:385px;width:130px;height:14px;background:#fff"></div>
<div class="abs" style="left:26px;top:386px;width:13px;height:13px;border:1px solid #111;background:#fff"></div>
<svg class="i" style="left:28px;top:388px" width="9" height="9" viewBox="0 0 9 9" ><path d="M1 4.5L3.5 7.5L8.5 1" fill="none" stroke="#111" stroke-width="1.2"/></svg>
<div class="t" style="left:45px;top:385px;font-size:12.5px;letter-spacing:-0.147px;color:#111">Manual color range</div>
<div class="t" style="left:23px;top:410px;font-size:12.5px;letter-spacing:-0.207px;color:#111">Minimum:</div>
<div class="sunk" style="left:84px;top:406px;width:178px;height:21px;background:#fff;border-top-width:2px;border-left-width:2px"></div>
<div class="t" style="left:88px;top:410px;font-size:12.5px;letter-spacing:-0.137px;color:#111">322.72382</div>
<div class="abs" style="left:25px;top:435px;width:235px;height:15px;background:#b5adaa;border-top:1px solid #8a8683;border-left:1px solid #8a8683"></div>
<div class="abs" style="left:26px;top:436px;width:31px;height:14px;background:#fff;border:1px solid;border-color:#c8c4c0 #000 #000 #c8c4c0"></div>
<div class="abs" style="left:41px;top:439px;width:3px;height:8px;border-left:1px solid #8a8683;border-top:1px solid #8a8683"></div>
<div class="t" style="left:23px;top:462px;font-size:12.5px;letter-spacing:-0.246px;color:#111">Maximum:</div>
<div class="sunk" style="left:84px;top:458px;width:178px;height:21px;background:#fff;border-top-width:2px;border-left-width:2px"></div>
<div class="t" style="left:88px;top:462px;font-size:12.5px;letter-spacing:-0.115px;color:#111;background:#41a6e2;height:14px;line-height:14px">325</div>
<div class="abs" style="left:25px;top:487px;width:235px;height:15px;background:#b5adaa;border-top:1px solid #8a8683;border-left:1px solid #8a8683"></div>
<div class="abs" style="left:80px;top:488px;width:31px;height:14px;background:#fff;border:1px solid;border-color:#c8c4c0 #000 #000 #c8c4c0"></div>
<div class="abs" style="left:95px;top:491px;width:3px;height:8px;border-left:1px solid #8a8683;border-top:1px solid #8a8683"></div>
<div class="abs" style="left:16px;top:525px;width:253px;height:80px;border:1px solid #8a8683"></div>
<div class="abs" style="left:22px;top:520px;width:128px;height:14px;background:#fff"></div>
<div class="abs" style="left:26px;top:521px;width:13px;height:13px;border:1px solid #111;background:#fff"></div>
<div class="t" style="left:45px;top:520px;font-size:12.5px;letter-spacing:-0.159px;color:#111">Manual data range</div>
<div class="t" style="left:23px;top:545px;font-size:12.5px;letter-spacing:-0.207px;color:#a9a5a1">Minimum:</div>
<div class="sunk" style="left:84px;top:541px;width:178px;height:21px;background:#d6d2ce;border-top-width:2px;border-left-width:2px"></div>
<div class="t" style="left:88px;top:545px;font-size:12.5px;letter-spacing:-0.127px;color:#a9a5a1">322.7238182753675</div>
<div class="abs" style="left:25px;top:570px;width:235px;height:15px;background:#b5adaa;border-top:1px solid #8a8683;border-left:1px solid #8a8683"></div>
<div class="abs" style="left:26px;top:571px;width:31px;height:14px;background:#fff;border:1px solid;border-color:#c8c4c0 #000 #000 #c8c4c0"></div>
<div class="abs" style="left:41px;top:574px;width:3px;height:8px;border-left:1px solid #8a8683;border-top:1px solid #8a8683"></div>
</div>
<div class="abs" style="left:292px;top:30px;width:16px;height:573px;border-left:1px solid #8a8683;border-top:1px solid #8a8683"></div>
<div class="abs" style="left:293px;top:31px;width:14px;height:571px;background:#b5adaa"></div>
<div class="raised" style="left:293px;top:31px;width:14px;height:14px"></div>
<svg class="i" style="left:296px;top:34px" width="8" height="8" viewBox="0 0 8 8" ><path d="M0 5.5H8L4 0.5Z" fill="#b0aaa6"/><path d="M0 6.5H8" stroke="#fff"/></svg>
<div class="raised" style="left:293px;top:45px;width:14px;height:341px"></div>
<div class="raised" style="left:293px;top:588px;width:14px;height:14px"></div>
<svg class="i" style="left:296px;top:593px" width="8" height="5" viewBox="0 0 8 5" ><path d="M0 0H8L4 4.5Z" fill="#111"/></svg>
</div>
<div class="abs" id="gr" style="left:522px;top:81px;width:555px;height:606px">
<div class="abs" style="left:0;top:0;width:555px;height:606px;border:1px solid #9d9995;border-radius:7px 7px 0 0"></div>
<div class="abs" style="left:100px;top:27px;width:454px;height:1px;background:#9d9995"></div>
<svg class="i" style="left:0;top:0" width="555" height="30"><path d="M0.5 27.5V6.5Q0.5 0.5 6.5 0.5H65C71 0.5 74 5 78 10L87 19.5C91 24 96 27.5 106 27.5H0.5Z" fill="url(#tabg)"/><path d="M0.5 27.5V6.5Q0.5 0.5 6.5 0.5H65C71 0.5 74 5 78 10L87 19.5C91 24 96 27.5 106 27.5" fill="none" stroke="#9d9995"/></svg>
<svg class="i" style="left:5px;top:6px" width="16" height="16" viewBox="0 0 16 16" ><path d="M10 0L14 11.5Q10.5 14 7 11.5Z" fill="#c8a0dc"/><path d="M10 0L14 11.5Q12.5 12.8 10.5 13Z" fill="#9c68b8"/><circle cx="5" cy="11.2" r="3.9" fill="#20b8d0"/><circle cx="4" cy="10" r="1.8" fill="#90e8f0"/></svg>
<div class="t" style="left:24px;top:7px;font-size:12.5px;letter-spacing:-0.188px">Graphics</div>
<svg class="i" style="left:209px;top:7px" width="14" height="14" viewBox="0 0 14 14" opacity="1"><path d="M8.5 8.5L13 13" stroke="#2c5878" stroke-width="2.2"/><circle cx="5.5" cy="5.5" r="4.6" fill="#e8f0f6" stroke="#6c8ca4" stroke-width="1.4"/><path d="M3 5.5H8" stroke="#2c5878" stroke-width="1.1"/><path d="M5.5 3V8" stroke="#2c5878" stroke-width="1.1"/></svg>
<svg class="i" style="left:235px;top:7px" width="14" height="14" viewBox="0 0 14 14" opacity="1"><path d="M8.5 8.5L13 13" stroke="#2c5878" stroke-width="2.2"/><circle cx="5.5" cy="5.5" r="4.6" fill="#e8f0f6" stroke="#6c8ca4" stroke-width="1.4"/><path d="M3 5.5H8" stroke="#2c5878" stroke-width="1.1"/></svg>
<svg class="i" style="left:263px;top:6px" width="14" height="14" viewBox="0 0 14 14" opacity="0.45"><path d="M8.5 8.5L13 13" stroke="#2c5878" stroke-width="2.2"/><circle cx="5.5" cy="5.5" r="4.6" fill="#e8f0f6" stroke="#6c8ca4" stroke-width="1.4"/><path d="M3 5.5H8" stroke="#2c5878" stroke-width="1.1"/><path d="M5.5 3V8" stroke="#2c5878" stroke-width="1.1"/></svg>
<svg class="i" style="left:260px;top:11px" width="10" height="9" viewBox="0 0 10 9" ><rect x="0.5" y="0.5" width="8" height="8" fill="none" stroke="#2c5878" stroke-width="1.1" stroke-dasharray="2 1.2"/></svg>
<svg class="i" style="left:287px;top:6px" width="16" height="15" viewBox="0 0 16 15" ><rect x="0.5" y="0.5" width="14.5" height="14" fill="#ccd8e0" stroke="#8cacc0" stroke-width="0.9"/><path d="M7.7 1.2L10.2 4H5.2ZM7.7 13.8L10.2 11H5.2ZM1.2 7.5L4 5V10ZM14.2 7.5L11.4 5V10Z" fill="#18a8d8"/><path d="M5.5 7.5H10M7.7 5.2V9.8" stroke="#2c5878" stroke-width="1.1"/></svg>
<div class="vsep" style="left:309px;top:2px;height:25px"></div>
<svg class="i" style="left:316px;top:6px" width="18" height="15" viewBox="0 0 18 15" ><path d="M7.5 13.5V2" stroke="#1070f0" stroke-width="1"/><path d="M7.5 0.5L9.3 3.8H5.7Z" fill="#1070f0"/><path d="M7.5 13.5L2 8.8" stroke="#20c020" stroke-width="1"/><path d="M0.8 7.6L4 8.2L2.2 10.4Z" fill="#20c020"/><path d="M7.5 13.5L15.5 8" stroke="#f04010" stroke-width="1"/><path d="M17 7L13.8 7.3L15.4 9.8Z" fill="#f04010"/></svg>
<svg class="i" style="left:335px;top:12px" width="8" height="5" viewBox="0 0 8 5" ><path d="M0 0H8L4 4.5Z" fill="#111"/></svg>
<svg class="i" style="left:352px;top:7px" width="16" height="15" viewBox="0 0 16 15" ><path d="M2.5 13V2" stroke="#20c020" stroke-width="1.2"/><path d="M2.5 0L4.5 3.5H0.5Z" fill="#20c020"/><path d="M2.5 12.5H13" stroke="#f04010" stroke-width="1.2"/><path d="M15 12.5L11.5 10.5V14.5Z" fill="#f04010"/><text x="4" y="9.5" font-family="Liberation Sans,sans-serif" font-size="10" fill="#6c8ca4" stroke="#c8d8e4" stroke-width="0.3">xy</text></svg>
<svg class="i" style="left:378px;top:7px" width="16" height="15" viewBox="0 0 16 15" ><path d="M2.5 13V2" stroke="#1070f0" stroke-width="1.2"/><path d="M2.5 0L4.5 3.5H0.5Z" fill="#1070f0"/><path d="M2.5 12.5H13" stroke="#20c020" stroke-width="1.2"/><path d="M15 12.5L11.5 10.5V14.5Z" fill="#20c020"/><text x="4" y="9.5" font-family="Liberation Sans,sans-serif" font-size="10" fill="#6c8ca4" stroke="#c8d8e4" stroke-width="0.3">yz</text></svg>
<svg class="i" style="left:404px;top:7px" width="16" height="15" viewBox="0 0 16 15" ><path d="M2.5 13V2" stroke="#f04010" stroke-width="1.2"/><path d="M2.5 0L4.5 3.5H0.5Z" fill="#f04010"/><path d="M2.5 12.5H13" stroke="#1070f0" stroke-width="1.2"/><path d="M15 12.5L11.5 10.5V14.5Z" fill="#1070f0"/><text x="4" y="9.5" font-family="Liberation Sans,sans-serif" font-size="10" fill="#6c8ca4" stroke="#c8d8e4" stroke-width="0.3">zx</text></svg>
<div class="vsep" style="left:428px;top:2px;height:25px"></div>
<div class="abs" style="left:432px;top:2px;width:24px;height:24px;background:#b5adaa;border-top:2px solid #000;border-left:2px solid #000"></div>
<svg class="i" style="left:436px;top:6px" width="16" height="16" viewBox="0 0 16 16" ><defs><radialGradient id="lampg" cx="0.6" cy="0.7" r="0.7"><stop offset="0" stop-color="#fff"/><stop offset="1" stop-color="#b8d8ec"/></radialGradient></defs><rect width="16" height="16" fill="url(#lampg)"/><path d="M1 1L4 0.5L8 5H14L9.5 10V14H7.5V9.5Z" fill="#4c6c88"/><circle cx="10" cy="12" r="1.8" fill="#e8f4fc" stroke="#88a8c8" stroke-width="0.8"/></svg>
<svg class="i" style="left:463px;top:7px" width="15" height="13" viewBox="0 0 15 13" ><path d="M0.5 2.5L3.5 0.5H11L14.5 3V10.5L11.5 12.5H4L0.5 10Z" fill="#e4ecf0" stroke="#ccd8e0" stroke-width="0.8"/><path d="M3.5 4H14.5M3.5 4V12.5M0.5 2.5L3.5 4" fill="none" stroke="#f4f8fa" stroke-width="1"/></svg>
<div class="vsep" style="left:485px;top:2px;height:25px"></div>
<svg class="i" style="left:494px;top:7px" width="17" height="13" viewBox="0 0 17 13" ><path d="M0.5 3.5H4L5.5 0.5H11.5L13 3.5H16.5V12.5H0.5Z" fill="#7c8c98" stroke="#4c5c68" stroke-width="0.9"/><circle cx="8.5" cy="7.5" r="3.6" fill="#a8b8c4" stroke="#3c4c58" stroke-width="0.8"/><circle cx="8.5" cy="7.5" r="1.8" fill="#3c4c58"/></svg>
<div class="abs" style="left:520px;top:7px;width:10px;height:4px;border:1px solid #000;background:#fff"></div><div class="abs" style="left:538px;top:7px;width:10px;height:10px;border:1px solid #000;border-top-width:2px;background:#fff"></div>
<div class="abs" style="left:3px;top:30px;width:550px;height:573px;background:linear-gradient(#7dc5e8,#a2d5ee 50%,#c9e7f5);overflow:hidden">
<svg class="i" style="left:0;top:0" width="550" height="573" viewBox="525 111 550 573" font-family="DejaVu Sans,sans-serif" font-size="12.5" fill="#1c1c1c">
<defs>
<linearGradient id="cbar" x1="0" y1="0" x2="0" y2="1"><stop offset="0" stop-color="#ffffff"/><stop offset="0.12" stop-color="#ffffb8"/><stop offset="0.22" stop-color="#ffff68"/><stop offset="0.38" stop-color="#ffff00"/><stop offset="0.44" stop-color="#ffd000"/><stop offset="0.545" stop-color="#ff8000"/><stop offset="0.66" stop-color="#ff3000"/><stop offset="0.735" stop-color="#f00000"/><stop offset="0.88" stop-color="#c00000"/><stop offset="1" stop-color="#7c0000"/></linearGradient>
<radialGradient id="plate" gradientUnits="userSpaceOnUse" cx="902" cy="352" r="150" gradientTransform="translate(902 352) scale(0.62 1) translate(-902 -352)"><stop offset="0" stop-color="#ff1010"/><stop offset="0.2" stop-color="#fa0000"/><stop offset="0.5" stop-color="#e00000"/><stop offset="0.8" stop-color="#cc0000"/><stop offset="1" stop-color="#b80000"/></radialGradient>
<linearGradient id="platev" gradientUnits="userSpaceOnUse" x1="0" y1="380" x2="0" y2="490"><stop offset="0" stop-color="#700000" stop-opacity="0"/><stop offset="1" stop-color="#700000" stop-opacity="0.75"/></linearGradient>
<radialGradient id="hole" cx="0.5" cy="0.5" r="0.5"><stop offset="0" stop-color="#fffff0"/><stop offset="0.3" stop-color="#ffff60"/><stop offset="0.65" stop-color="#ffe000"/><stop offset="0.9" stop-color="#ffa000"/><stop offset="1" stop-color="#f05000"/></radialGradient>
<linearGradient id="basetop" gradientUnits="userSpaceOnUse" x1="650" y1="520" x2="920" y2="470"><stop offset="0" stop-color="#e86060"/><stop offset="0.3" stop-color="#d46666"/><stop offset="0.6" stop-color="#c06868"/><stop offset="1" stop-color="#c87070"/></linearGradient>
<linearGradient id="basefront" gradientUnits="userSpaceOnUse" x1="703" y1="0" x2="930" y2="0"><stop offset="0" stop-color="#b40000"/><stop offset="0.5" stop-color="#8c0000"/><stop offset="1" stop-color="#6c0000"/></linearGradient>
<linearGradient id="fillet" gradientUnits="userSpaceOnUse" x1="900" y1="458" x2="890" y2="473"><stop offset="0" stop-color="#8c0000"/><stop offset="0.45" stop-color="#560000"/><stop offset="0.8" stop-color="#7c1010"/><stop offset="1" stop-color="#c05050"/></linearGradient>
<linearGradient id="side" gradientUnits="userSpaceOnUse" x1="0" y1="258" x2="0" y2="497"><stop offset="0" stop-color="#bc0000"/><stop offset="0.6" stop-color="#a40000"/><stop offset="0.9" stop-color="#800000"/><stop offset="1" stop-color="#6c0000"/></linearGradient>
</defs>
<path d="M635 254.3L890 209.8" fill="none" stroke="#8c8c8c" stroke-width="1"/>
<path d="M635 254.3L642 512.5" fill="none" stroke="#8c8c8c" stroke-width="1"/>
<path d="M760.4 232.5L760.4 466.5" fill="none" stroke="#8c8c8c" stroke-width="1"/>
<path d="M641.3 380.4L868 334" fill="none" stroke="#8c8c8c" stroke-width="1"/>
<path d="M904 210.8L973.6 253.7" fill="none" stroke="#8c8c8c" stroke-width="1"/>
<path d="M931 228.6L931 242" fill="none" stroke="#8c8c8c" stroke-width="1"/>
<path d="M878.6 210.8L878.6 216" fill="none" stroke="#8c8c8c" stroke-width="1"/>
<path d="M959.7 246L948.7 500.4" fill="none" stroke="#8c8c8c" stroke-width="1"/>
<path d="M946.8 365.6L967.8 380" fill="none" stroke="#8c8c8c" stroke-width="1"/>
<path d="M943.6 485L962.4 500.4" fill="none" stroke="#8c8c8c" stroke-width="1"/>
<path d="M641.6 501.2L646 500.2" fill="none" stroke="#8c8c8c" stroke-width="1"/>
<path d="M646.5 527L703.4 585.7" fill="none" stroke="#8c8c8c" stroke-width="1"/>
<path d="M667.5 549.7L684 546" fill="none" stroke="#8c8c8c" stroke-width="1"/>
<path d="M691.7 573.5L939 512.6" fill="none" stroke="#8c8c8c" stroke-width="1"/>
<path d="M923.7 511.5L940.3 527" fill="none" stroke="#8c8c8c" stroke-width="1"/>
<path d="M808.4 538.4L822.4 554" fill="none" stroke="#8c8c8c" stroke-width="1"/>
<path d="M645.8 494L703.4 552V563.6L645.8 506.2Z" fill="#c40000" stroke="#1a0000" stroke-width="0.8"/>
<path d="M703.4 552L917 500.4C930 497 934.5 478 934.9 462L940.4 260.5L952.5 258L945.2 470C944.5 492 938 506 917 511.5L703.4 563.6Z" fill="url(#basefront)" stroke="#1a0000" stroke-width="0.8"/>
<path d="M940.4 260.5L952.5 258L945.2 470C944.8 482 942.5 491 938.7 497L930.7 486C933.5 478 934.7 470 934.9 462Z" fill="url(#side)"/>
<path d="M645.8 494L856.4 446.4L923.5 497C921.5 498.5 919.5 499.6 917 500.4L703.4 552Z" fill="url(#basetop)" stroke="#1a0000" stroke-width="0.8"/>
<path d="M867 433C866.5 441 863 445 856.4 446.4L923.5 497C927 494 929.5 490 931 484.5Z" fill="url(#fillet)" stroke="#1a0000" stroke-width="0.7"/>
<path d="M872.2 216.4L940.4 260.5L934.9 462C934.7 470 933.5 478 931 484.5L867 433Z" fill="url(#plate)" stroke="#1a0000" stroke-width="0.8"/>
<path d="M872.2 216.4L940.4 260.5L934.9 462C934.7 470 933.5 478 931 484.5L867 433Z" fill="url(#platev)"/>
<path d="M872.2 216.4L883.4 214.5L952.5 258L940.4 260.5Z" fill="#ff6868" stroke="#1a0000" stroke-width="0.8"/>
<path d="M940.4 260.5L934.9 462C934.5 478 930 497 917 500.4L703.4 552" fill="none" stroke="#1a0000" stroke-width="0.8"/>
<ellipse cx="902.2" cy="350.6" rx="7.6" ry="16" transform="rotate(-8 902.2 350.6)" fill="url(#hole)" stroke="#1a0000" stroke-width="1"/>
<ellipse cx="695.7" cy="499.6" rx="16.3" ry="7.7" fill="#ff6464" stroke="#1a0000" stroke-width="0.8"/>
<ellipse cx="725.3" cy="528.3" rx="16.5" ry="8.2" fill="#ff6464" stroke="#1a0000" stroke-width="0.8"/>
<ellipse cx="731" cy="558" rx="5" ry="1.2" fill="#c8b848" stroke="#605010" stroke-width="0.5"/>
<text x="800" y="126" text-anchor="middle" font-size="12.5">Surface: Temperature (K)</text>
<text x="616.5" y="261" text-anchor="start" font-size="12.5">0.1</text>
<text x="614" y="388" text-anchor="start" font-size="12.5">0.05</text>
<text x="627.5" y="508" text-anchor="start" font-size="12.5">0</text>
<text x="648.5" y="556" text-anchor="start" font-size="12.5">-20</text>
<text x="672" y="580" text-anchor="start" font-size="12.5">-40</text>
<text x="704" y="594.5" text-anchor="start" font-size="12.5">0</text>
<text x="637.5" y="576" font-size="12.5">×10<tspan dy="-5" font-size="9">-3</tspan></text>
<text x="817" y="565" text-anchor="start" font-size="12.5">0.05</text>
<text x="937.8" y="536" text-anchor="start" font-size="12.5">0.1</text>
<path d="M568.8 640.2V620" stroke="#0000ff" stroke-width="2.2"/><path d="M568.8 611.5L572.4 621.5H565.2Z" fill="#0000ff"/>
<path d="M568.8 640.2L589 635.8" stroke="#ff0000" stroke-width="2"/><path d="M596.8 634.2L587.8 632.3L589.2 639.2Z" fill="#ff0000"/>
<path d="M568.8 640.2L560 632.5" stroke="#00ee00" stroke-width="2.4"/><path d="M553.6 627.6L563 629L557.6 635Z" fill="#00ee00"/>
<text x="565.5" y="609.5" text-anchor="start" font-size="11.5">z</text>
<text x="548" y="628" text-anchor="start" font-size="11.5">y</text>
<text x="598.5" y="636.8" text-anchor="start" font-size="11.5">x</text>
<rect x="978.5" y="182.5" width="15" height="470" fill="url(#cbar)" stroke="#000" stroke-width="1"/>
<text x="1001.5" y="187.6" text-anchor="start" font-size="12.5">325</text>
<path d="M979 286.1H982M990 286.1H993" stroke="#000" stroke-width="1"/>
<text x="1001.5" y="290.8" text-anchor="start" font-size="12.5">324.5</text>
<path d="M979 389.3H982M990 389.3H993" stroke="#000" stroke-width="1"/>
<text x="1001.5" y="393.9" text-anchor="start" font-size="12.5">324</text>
<path d="M979 492.5H982M990 492.5H993" stroke="#000" stroke-width="1"/>
<text x="1001.5" y="497.1" text-anchor="start" font-size="12.5">323.5</text>
<path d="M979 595.6H982M990 595.6H993" stroke="#000" stroke-width="1"/>
<text x="1001.5" y="600.2" text-anchor="start" font-size="12.5">323</text>
<path d="M970.4 147L975.8 156.6H965Z" fill="#000"/>
<text x="980.5" y="156.8" text-anchor="start" font-size="12.5">330.75</text>
<path d="M970.4 674.4L975.8 664.8H965Z" fill="#000"/>
<text x="980.5" y="674" text-anchor="start" font-size="12.5">322.72</text>
</svg>
</div>
</div>
<div class="vsep" style="left:585px;top:689px;height:26px"></div>
<div class="vsep" style="left:733px;top:689px;height:26px"></div>
<div class="t" style="left:593px;top:695px;font-size:12.5px;letter-spacing:-0.331px">628 MB | 2831 MB</div>
<div class="abs" style="left:935px;top:690px;width:145px;height:28px;border:1px solid #fff;border-radius:2px 5px 5px 2px"></div>
<div class="handle" style="left:940px;top:693px;height:22px"></div>
<svg class="i" style="left:955px;top:700px" width="9" height="8" viewBox="0 0 9 8" ><rect x="2.6" y="0.6" width="5.8" height="4.5" fill="#d6d2ce" stroke="#4c443c" stroke-width="1.2"/><rect x="0.6" y="3" width="5.8" height="4.4" fill="#d6d2ce" stroke="#4c443c" stroke-width="1.2"/></svg>
<svg class="i" style="left:977px;top:699px" width="15" height="10" viewBox="0 0 15 10" ><rect x="0.5" y="0.5" width="14" height="9" fill="#f0f6fa" stroke="#8cacc4"/><path d="M0.5 0.5L7.5 6.5L14.5 0.5M0.5 9.5L5.5 5M14.5 9.5L9.5 5" fill="none" stroke="#a8c0d0" stroke-width="0.8"/></svg>
<svg class="i" style="left:1003px;top:701px" width="16" height="6" viewBox="0 0 16 6" ><rect x="0.5" y="0.5" width="15" height="5" rx="1.5" fill="#dce4ea" stroke="#8cacc4"/><rect x="1.5" y="1" width="8" height="4" fill="#90d810"/><path d="M3.5 1V5M5.5 1V5M7.5 1V5M11.5 1V5M13.5 1V5" stroke="#c8e880" stroke-width="0.5"/></svg>
<svg class="i" style="left:1029px;top:697px" width="15" height="13" viewBox="0 0 15 13" ><rect x="0.5" y="0.5" width="14" height="12" fill="#f0f6fa" stroke="#8cacc4"/><rect x="2.5" y="2.5" width="2.4" height="1" fill="#6c8ca4"/><rect x="6.5" y="2.5" width="2.4" height="1" fill="#6c8ca4"/><rect x="10.5" y="2.5" width="2.4" height="1" fill="#6c8ca4"/><rect x="2.5" y="5.0" width="2.4" height="1" fill="#6c8ca4"/><rect x="6.5" y="5.0" width="2.4" height="1" fill="#6c8ca4"/><rect x="10.5" y="5.0" width="2.4" height="1" fill="#6c8ca4"/><rect x="2.5" y="7.5" width="2.4" height="1" fill="#6c8ca4"/><rect x="6.5" y="7.5" width="2.4" height="1" fill="#6c8ca4"/><rect x="10.5" y="7.5" width="2.4" height="1" fill="#6c8ca4"/><rect x="2.5" y="10.0" width="2.4" height="1" fill="#6c8ca4"/><rect x="6.5" y="10.0" width="2.4" height="1" fill="#6c8ca4"/><rect x="10.5" y="10.0" width="2.4" height="1" fill="#6c8ca4"/></svg>
<svg class="i" style="left:1057px;top:697px" width="12" height="15" viewBox="0 0 12 15" ><rect x="0.5" y="0.5" width="11" height="14" fill="#f0f6fa" stroke="#8cacc4"/><rect x="1.6" y="2" width="1.2" height="1.2" fill="#1890f0"/><rect x="4" y="2.1" width="6" height="1" fill="#7c98ac"/><rect x="1.6" y="4" width="1.2" height="1.2" fill="#1890f0"/><rect x="4" y="4.1" width="5" height="1" fill="#7c98ac"/><rect x="1.6" y="6" width="1.2" height="1.2" fill="#1890f0"/><rect x="4" y="6.1" width="6" height="1" fill="#7c98ac"/><rect x="1.6" y="8" width="1.2" height="1.2" fill="#1890f0"/><rect x="4" y="8.1" width="5" height="1" fill="#7c98ac"/><rect x="1.6" y="10" width="1.2" height="1.2" fill="#1890f0"/><rect x="4" y="10.1" width="6" height="1" fill="#7c98ac"/><rect x="1.6" y="12" width="1.2" height="1.2" fill="#1890f0"/><rect x="4" y="12.1" width="5" height="1" fill="#7c98ac"/></svg>
</div>
</body></html>
